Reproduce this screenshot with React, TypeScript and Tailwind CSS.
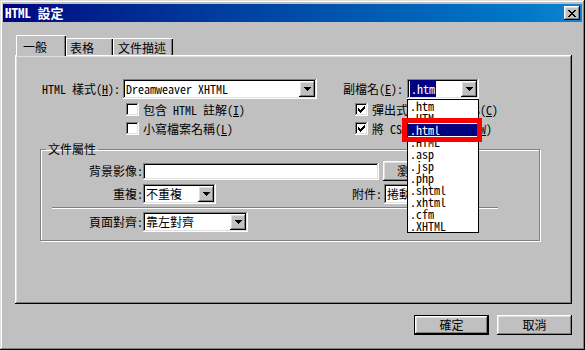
import { ReactNode } from "react"

const raised =
    "shadow-[inset_-1px_-1px_#000,inset_1px_1px_#fff,inset_-2px_-2px_#808080,inset_2px_2px_#dfdfdf]"
const sunken =
    "shadow-[inset_-1px_-1px_#fff,inset_1px_1px_#808080,inset_-2px_-2px_#dfdfdf,inset_2px_2px_#000]"

const Arrow = () => (
    <svg width="7" height="4" viewBox="0 0 7 4" shapeRendering="crispEdges">
        <path d="M0 0h7v1H0z M1 1h5v1H1z M2 2h3v1H2z M3 3h1v1H3z" fill="#000" />
    </svg>
)

const Combo = ({ w, children, list }: { w: string; children: ReactNode; list?: ReactNode }) => (
    <div className={`relative flex h-[20px] items-center bg-white ${sunken} ${w}`}>
        <div className="flex-1 whitespace-nowrap pl-[3px]">{children}</div>
        <div className={`mr-[2px] flex h-[16px] w-[16px] items-center justify-center bg-[#c0c0c0] ${raised}`}>
            <Arrow />
        </div>
        {list}
    </div>
)

const Check = ({ checked, children }: { checked?: boolean; children: ReactNode }) => (
    <div className="flex h-[19px] items-center gap-[4px] whitespace-nowrap">
        <div className={`h-[13px] w-[13px] bg-white p-[3px] ${sunken}`}>
            {checked && (
                <svg width="7" height="7" viewBox="0 0 7 7" shapeRendering="crispEdges" className="block">
                    <path
                        d="M6 0h1v1H6z M5 1h2v1H5z M0 2h1v1H0z M4 2h3v1H4z M0 3h2v1H0z M3 3h3v1H3z M0 4h5v1H0z M1 5h3v1H1z M2 6h1v1H2z"
                        fill="#000"
                    />
                </svg>
            )}
        </div>
        <span>{children}</span>
    </div>
)

const exts = [".htm", ".HTM", ".html", ".HTML", ".asp", ".jsp", ".php", ".shtml", ".xhtml", ".cfm", ".XHTML"]

const ExtList = () => (
    <div className="absolute left-0 top-full z-20 w-[72px] border border-black bg-white">
        {exts.map((e) =>
            e === ".html" ? (
                <div key={e} className="relative h-[12px] bg-[#000080] pl-[2px] leading-[12px] text-white">
                    {e}
                    <div className="absolute -left-[6px] -top-[6px] h-[24px] w-[80px] border-[5px] border-[#ff0000]" />
                </div>
            ) : (
                <div key={e} className="h-[12px] pl-[2px] leading-[12px]">
                    {e}
                </div>
            )
        )}
    </div>
)

const CloseGlyph = () => (
    <svg width="8" height="7" viewBox="0 0 8 7" shapeRendering="crispEdges">
        <path
            d="M0 0h2v1H0z M6 0h2v1H6z M1 1h2v1H1z M5 1h2v1H5z M2 2h4v1H2z M3 3h2v1H3z M2 4h4v1H2z M1 5h2v1H1z M5 5h2v1H5z M0 6h2v1H0z M6 6h2v1H6z"
            fill="#000"
        />
    </svg>
)

export default function App() {
    return (
        <div
            className={`flex h-[350px] w-[585px] flex-col bg-[#c0c0c0] px-[3px] pt-[4px] font-['Noto_Sans_Mono_CJK_TC','Noto_Sans_CJK_TC',monospace] text-[12px] leading-[14px] text-black shadow-[inset_-1px_-1px_#000,inset_1px_1px_#dfdfdf,inset_-2px_-2px_#808080,inset_2px_2px_#fff]`}
        >
            {/* title bar */}
            <div className="flex h-[18px] items-center justify-between bg-linear-to-r from-[#000080] to-[#1084d0] pl-[2px] pr-[2px]">
                <span className="text-[13px] font-bold text-white">HTML 設定</span>
                <div className={`flex h-[14px] w-[16px] items-center justify-center bg-[#c0c0c0] ${raised}`}>
                    <CloseGlyph />
                </div>
            </div>

            {/* tabs */}
            <div className="ml-[13px] mt-[13px] flex items-end">
                <div className="relative z-10 -mb-[1px] h-[21px] w-[50px] bg-[#c0c0c0] pl-[7px] pt-[5px] shadow-[inset_1px_1px_#fff,inset_-1px_0_#000,inset_-2px_0_#808080]">
                    一般
                </div>
                <div className="h-[17px] w-[47px] pl-[4px] pt-[3px] shadow-[inset_1px_1px_#fff,inset_-1px_0_#000,inset_-2px_0_#808080]">
                    表格
                </div>
                <div className="h-[17px] w-[60px] pl-[5px] pt-[3px] shadow-[inset_1px_1px_#fff,inset_-1px_0_#000,inset_-2px_0_#808080]">
                    文件描述
                </div>
            </div>

            {/* tab panel */}
            <div className={`ml-[12px] h-[249px] w-[557px] ${raised}`}>
                <div className="flex pt-[24px]">
                    <div className="w-[328px]">
                        <div className="flex items-center">
                            <span className="w-[105px] text-right">
                                HTML 樣式(<u>H</u>):
                            </span>
                            <Combo w="ml-[3px] w-[194px]">Dreamweaver XHTML</Combo>
                        </div>
                        <div className="mt-[1px] pl-[111px]">
                            <Check>
                                包含 HTML 註解(<u>I</u>)
                            </Check>
                            <Check>
                                小寫檔案名稱(<u>L</u>)
                            </Check>
                        </div>
                    </div>
                    <div>
                        <div className="flex items-center">
                            <span className="w-[64px]">
                                副檔名(<u>E</u>):
                            </span>
                            <Combo w="w-[72px]" list={<ExtList />}>
                                <span className="bg-[#000080] px-[1px] text-white">.htm</span>
                            </Combo>
                        </div>
                        <div className="mt-[1px] pl-[12px]">
                            <Check checked>
                                彈出式選單使用 CSS(<u>C</u>)
                            </Check>
                            <Check checked>
                                將 CSS 匯出成檔案(<u>W</u>)
                            </Check>
                        </div>
                    </div>
                </div>

                <fieldset className="ml-[25px] mt-[4px] w-[500px] border border-[#808080] pb-[8px] pt-[5px] shadow-[1px_1px_0_#fff,inset_1px_1px_0_#fff]">
                    <legend className="ml-[5px] px-[2px] leading-[14px]">文件屬性</legend>
                    <div className="flex h-[20px] items-center">
                        <span className="w-[102px] text-right">背景影像:</span>
                        <div className={`h-[17px] w-[236px] bg-white ${sunken}`} />
                        <div className={`ml-[4px] flex h-[20px] w-[70px] items-center justify-center ${raised}`}>
                            瀏覽...
                        </div>
                    </div>
                    <div className="mt-[3px] flex h-[20px] items-center">
                        <span className="w-[102px] text-right">重複:</span>
                        <Combo w="w-[73px]">不重複</Combo>
                        <span className="ml-[136px]">附件:</span>
                        <Combo w="ml-[2px] w-[85px]">捲動</Combo>
                    </div>
                    <div className="ml-[11px] mt-[3px] w-[446px] border-b border-t border-b-white border-t-[#808080]" />
                    <div className="mt-[3px] flex h-[20px] items-center">
                        <span className="w-[102px] text-right">頁面對齊:</span>
                        <Combo w="w-[105px]">靠左對齊</Combo>
                    </div>
                </fieldset>
            </div>

            {/* buttons */}
            <div className="mr-[10px] mt-[11px] flex justify-end gap-[8px]">
                <div className="h-[20px] w-[75px] border border-black">
                    <div className={`flex h-full items-center justify-center ${raised}`}>確定</div>
                </div>
                <div className={`flex h-[20px] w-[75px] items-center justify-center ${raised}`}>取消</div>
            </div>
        </div>
    )
}
